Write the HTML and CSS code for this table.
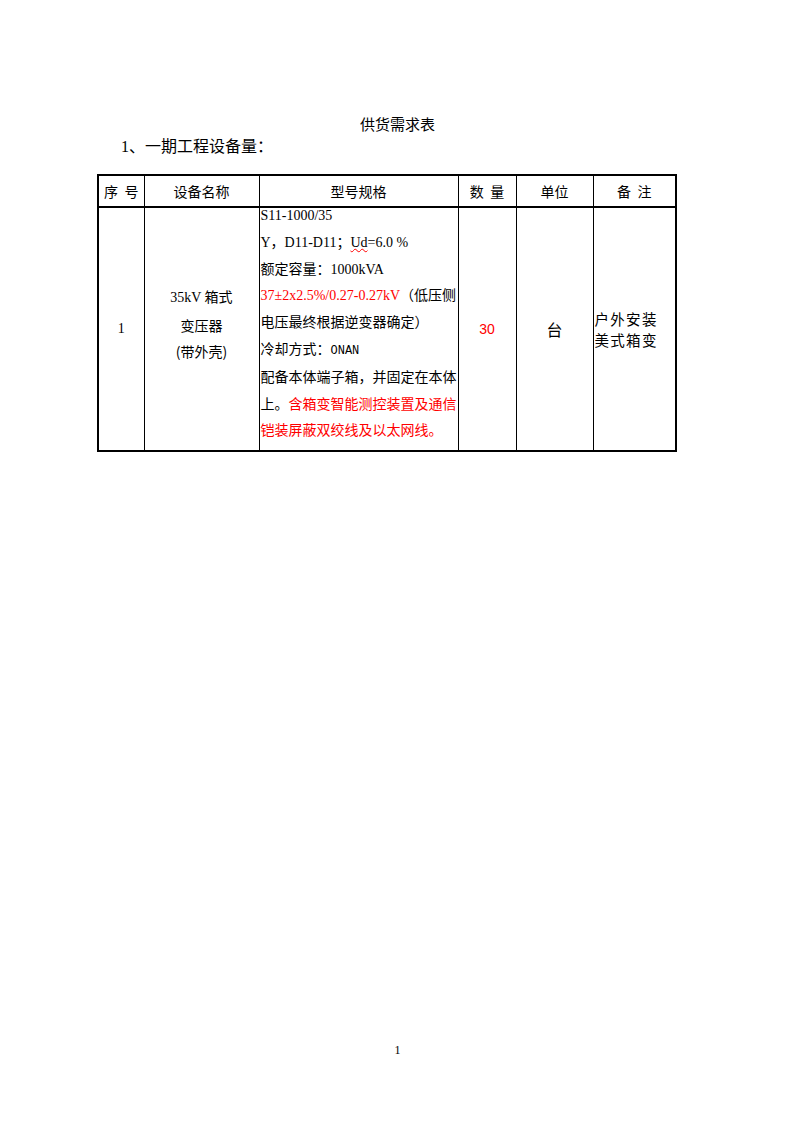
FILE: index.html
```html
<!DOCTYPE html>
<html lang="zh">
<head>
<meta charset="utf-8">
<title>供货需求表</title>
<link rel="stylesheet" href="styles.css">
</head>
<body>
<div class="page">
  <h1 class="title">供货需求表</h1>
  <p class="section"><span class="num">1</span>、一期工程设备量：</p>
  <table class="grid">
    <colgroup>
      <col class="c1"><col class="c2"><col class="c3"><col class="c4"><col class="c5"><col class="c6">
    </colgroup>
    <thead>
      <tr>
        <th>序&nbsp;&nbsp;号</th>
        <th>设备名称</th>
        <th>型号规格</th>
        <th>数&nbsp;&nbsp;量</th>
        <th>单位</th>
        <th>备&nbsp;&nbsp;注</th>
      </tr>
    </thead>
    <tbody>
      <tr>
        <td class="idx">1</td>
        <td class="name">
          <div class="ln"><span class="lat">35kV</span> 箱式</div>
          <div class="ln">变压器</div>
          <div class="ln">(带外壳)</div>
        </td>
        <td class="spec">
          <div class="ln">S11-1000/35</div>
          <div class="ln">Y，D11-D11；<span class="wavy">Ud</span>=6.0 %</div>
          <div class="ln">额定容量：1000kVA</div>
          <div class="ln"><span class="red">37±2x2.5%/0.27-0.27kV</span>（低压侧</div>
          <div class="ln">电压最终根据逆变器确定）</div>
          <div class="ln">冷却方式：<span class="mono">ONAN</span></div>
          <div class="ln">配备本体端子箱，并固定在本体</div>
          <div class="ln">上。<span class="red">含箱变智能测控装置及通信</span></div>
          <div class="ln red">铠装屏蔽双绞线及以太网线。</div>
        </td>
        <td class="qty">30</td>
        <td class="unit">台</td>
        <td class="note"><div class="nl">户外安装</div><div class="nl">美式箱变</div></td>
      </tr>
    </tbody>
  </table>
  <div class="pageno">1</div>
</div>
</body>
</html>
```

FILE: styles.css
```css
html, body {
  margin: 0;
  padding: 0;
  background: #ffffff;
}

body {
  font-family: "Noto Sans CJK SC", "Liberation Serif", serif;
  color: #000000;
}

.page {
  position: relative;
  width: 793px;
  height: 1122px;
  padding-top: 114px;
  box-sizing: border-box;
}

.title {
  margin: 0;
  font-size: 15px;
  font-weight: normal;
  line-height: 20px;
  text-align: center;
  padding-left: 2px;
}

.section {
  margin: 1px 0 0 121px;
  font-size: 16px;
  line-height: 20px;
}

.num {
  font-family: "Liberation Serif", serif;
}

.grid {
  margin: 17px 0 0 97px;
  border-collapse: collapse;
  border: 2px solid #000;
  table-layout: fixed;
  width: 578px;
}

.c1 { width: 46px; }
.c2 { width: 115px; }
.c3 { width: 199px; }
.c4 { width: 58px; }
.c5 { width: 77px; }
.c6 { width: 83px; }

.grid th,
.grid td {
  border: 1px solid #000;
  padding: 0;
}

.grid th {
  height: 30px;
  font-size: 14px;
  font-weight: normal;
  text-align: center;
  vertical-align: middle;
  border-bottom: 2px solid #000;
}

.grid td {
  vertical-align: middle;
  font-size: 14px;
}

.ln {
  line-height: 16px;
  padding-bottom: 10.8px;
  white-space: nowrap;
}

.idx {
  text-align: center;
  font-family: "Liberation Serif", serif;
  padding-top: 1px;
}

.name {
  text-align: center;
}

.name .ln {
  padding-bottom: 10.5px;
}

.lat {
  font-family: "Liberation Serif", serif;
}

.spec {
  font-family: "Liberation Serif", "Noto Sans CJK SC", serif;
  padding-left: 1px !important;
  vertical-align: top !important;
  overflow: visible;
}

.red {
  color: #ff0000;
}

.wavy {
  text-decoration: underline wavy #ff0000;
  text-decoration-thickness: 1px;
}

.mono {
  font-family: "Liberation Mono", monospace;
  font-size: 12px;
}

.qty {
  text-align: center;
  color: #ff0000;
  font-family: "Liberation Sans", sans-serif;
  padding-top: 1px;
}

.unit {
  text-align: center;
  font-size: 16px !important;
}

.note {
  text-align: left;
  padding-left: 1px !important;
  white-space: nowrap;
}

.nl {
  font-size: 14.5px;
  letter-spacing: 1.3px;
  line-height: 21px;
  height: 21px;
}

.pageno {
  position: absolute;
  left: 0;
  right: 0;
  top: 1042px;
  text-align: center;
  font-family: "Liberation Serif", serif;
  font-size: 12px;
  line-height: 16px;
  padding-left: 2px;
}
```
